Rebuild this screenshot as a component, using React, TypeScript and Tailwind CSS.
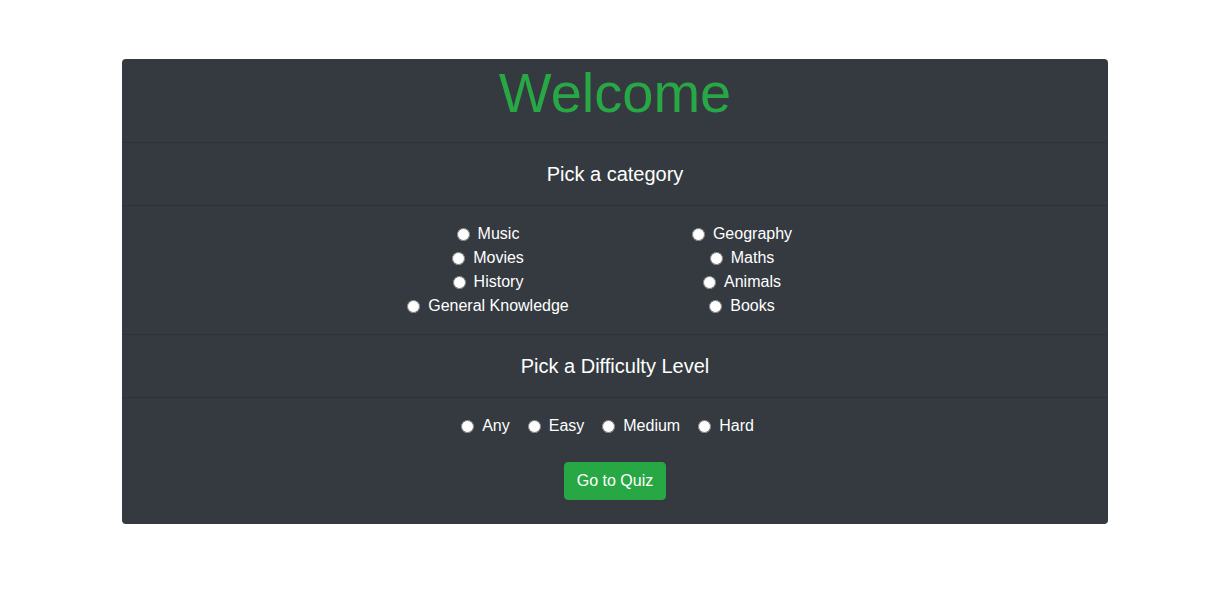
import { useState } from "react";

const CATEGORIES_LEFT = ["Music", "Movies", "History", "General Knowledge"];
const CATEGORIES_RIGHT = ["Geography", "Maths", "Animals", "Books"];
const LEVELS = ["Any", "Easy", "Medium", "Hard"];

function Radio({
  name,
  label,
  checked,
  onChange,
}: {
  name: string;
  label: string;
  checked: boolean;
  onChange: () => void;
}) {
  return (
    <label className="inline-flex items-center h-6 cursor-pointer">
      <input
        type="radio"
        name={name}
        checked={checked}
        onChange={onChange}
        className="m-0 w-[13px] h-[13px]"
      />
      <span className="ml-2">{label}</span>
    </label>
  );
}

export default function App() {
  const [category, setCategory] = useState("");
  const [level, setLevel] = useState("");

  return (
    <div className="min-h-[601px] bg-white pt-[59px] font-['Liberation_Sans',Arial,sans-serif] text-base text-white">
      <div className="ml-[122px] w-[986px] rounded bg-[#343a40]">
        <div className="h-[84px] border-b border-black/[0.125] text-center">
          <h1 className="text-[56px] leading-[1.2] text-[#28a745]">Welcome</h1>
        </div>

        <div className="flex h-[63px] items-center justify-center border-b border-black/[0.125] text-xl">
          Pick a category
        </div>

        <div className="flex h-[129px] justify-center border-b border-black/[0.125] pt-4">
          {[CATEGORIES_LEFT, CATEGORIES_RIGHT].map((col, i) => (
            <div key={i} className="flex w-[254px] flex-col items-center">
              {col.map((c) => (
                <Radio
                  key={c}
                  name="category"
                  label={c}
                  checked={category === c}
                  onChange={() => setCategory(c)}
                />
              ))}
            </div>
          ))}
        </div>

        <div className="flex h-[63px] items-center justify-center border-b border-black/[0.125] text-xl">
          Pick a Difficulty Level
        </div>

        <div className="flex flex-col items-center pt-4 pb-6">
          <div className="flex h-6 pl-[3px]">
            {LEVELS.map((l) => (
              <div key={l} className="mr-[18px] flex">
                <Radio
                  name="level"
                  label={l}
                  checked={level === l}
                  onChange={() => setLevel(l)}
                />
              </div>
            ))}
          </div>
          <button
            type="button"
            className="mt-6 rounded border border-[#28a745] bg-[#28a745] px-3 py-[6px] leading-6 text-white"
          >
            Go to Quiz
          </button>
        </div>
      </div>
    </div>
  );
}
